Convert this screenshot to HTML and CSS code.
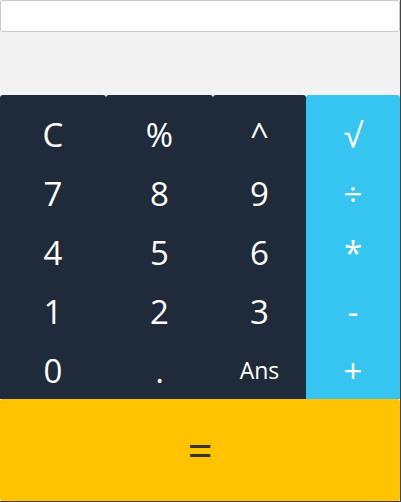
FILE: index.html
```html
<!DOCTYPE html>
<html>
<head>
<meta charset="utf-8">
<link rel="stylesheet" href="styles.css">
</head>
<body>
<div class="app">
  <input class="display" type="text">
  <div class="spacer"></div>
  <div class="keypad">
    <button class="key top">C</button>
    <button class="key top">%</button>
    <button class="key top">^</button>
    <button class="key op top">√</button>
    <button class="key">7</button>
    <button class="key">8</button>
    <button class="key">9</button>
    <button class="key op">÷</button>
    <button class="key">4</button>
    <button class="key">5</button>
    <button class="key">6</button>
    <button class="key op">*</button>
    <button class="key">1</button>
    <button class="key">2</button>
    <button class="key">3</button>
    <button class="key op">-</button>
    <button class="key">0</button>
    <button class="key">.</button>
    <button class="key small">Ans</button>
    <button class="key op">+</button>
  </div>
  <button class="equals">=</button>
</div>
</body>
</html>
```
FILE: styles.css
```css
html {
  background: #444;
}
body {
  margin: 0;
  font-family: "Open Sans", sans-serif;
}
.app {
  width: 400px;
  height: 501px;
  background: #f3f3f3;
  display: flex;
  flex-direction: column;
}
.display {
  box-sizing: border-box;
  width: 400px;
  height: 32px;
  margin: 0;
  border: 1px solid #c8c8c8;
  border-radius: 3px;
  background: #fff;
  outline: none;
}
.spacer {
  height: 63px;
}
.keypad {
  display: grid;
  grid-template-columns: 106px 107px 93px 94px;
  grid-template-rows: 69px 59px 59px 59px 58px;
}
.key {
  border: 0;
  margin: 0;
  padding: 0;
  background: #1f2a3a;
  color: #fff;
  font-family: "Open Sans", sans-serif;
  font-size: 33px;
  line-height: 1;
  display: flex;
  align-items: center;
  justify-content: center;
}
.key.top {
  padding-top: 10px;
  border-radius: 3px 3px 0 0;
}
.key.op {
  background: #36c5f0;
}
.key.small {
  font-size: 23px;
}
.equals {
  flex: 1;
  border: 0;
  margin: 0;
  padding: 0;
  border-radius: 3px;
  background: #ffc300;
  color: #333;
  font-family: "Open Sans", sans-serif;
  font-size: 44px;
}
```
